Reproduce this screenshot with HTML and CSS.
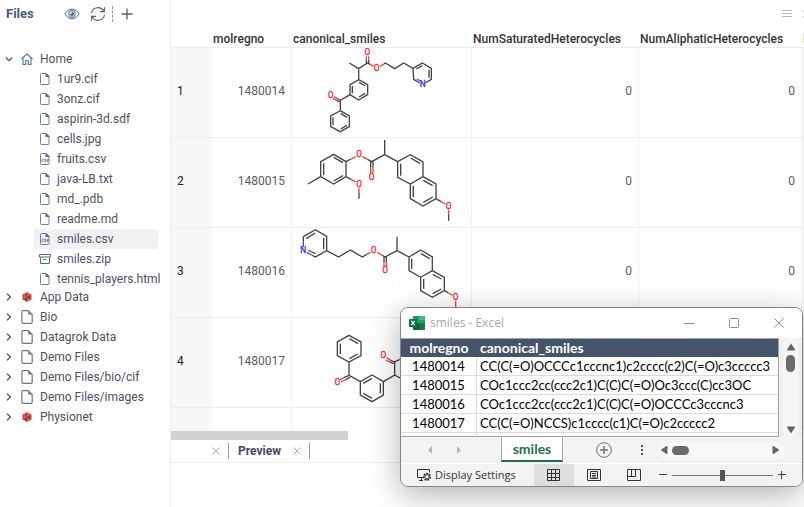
FILE: index.html
```html
<!DOCTYPE html>
<html lang="en">
<head>
<meta charset="utf-8">
<title>Files</title>
<link rel="stylesheet" href="styles.css">
</head>
<body>
<svg class="defs" aria-hidden="true">
  <symbol id="i-file" viewBox="0 0 12 14"><path d="M2.5 1.5h4.5l3 3v7q0 1-1 1h-6.500q-1 0-1-1v-9q0-1 1-1z" fill="none" stroke="#6d809f"/><path d="M7 1.500v3h3z" fill="#6d809f" stroke="#4b658f"/></symbol>
  <symbol id="i-csv" viewBox="0 0 12 14"><path d="M2.500 1.500h4.500l3 3v7q0 1-1 1h-6.500q-1 0-1-1v-9q0-1 1-1z" fill="none" stroke="#6d809f"/><path d="M7 1.500v3h3z" fill="#6d809f" stroke="#4b658f"/><path d="M4.600 7.300h-1q-.6 0-.6.600v1.200q0 .6.600.6h1M7 7.300h-.8q-.7 0-.7.600t.7.600.7.600-.7.600h-.8M7.900 7.100l.7 2.600.7-2.600" fill="none" stroke="#5a6d96" stroke-width=".9"/></symbol>
  <symbol id="i-zip" viewBox="0 0 12 14"><path d="M.5 2.500h11v2.500h-11zM1.500 5.500v6h9v-6M4.500 7.500h3" fill="none" stroke="#466c9b"/></symbol>
  <symbol id="i-page" viewBox="0 0 12 14"><path d="M2 .7h5.300l3.900 3.900v7.600q0 1.100-1.100 1.100h-8.100q-1.100 0-1.100-1.100v-10.400q0-1.100 1.100-1.100z" fill="none" stroke="#757575" stroke-width="1.200"/><path d="M7.200.7v3.900h4z" fill="#757575"/></symbol>
  <symbol id="i-home" viewBox="0 0 12 14"><path d="M.5 7L6 2l5.500 5M2 6v6.500h2.700v-4h2.600v4h2.700v-6.500" fill="none" stroke="#5b7396" stroke-width="1.100" stroke-linejoin="round"/></symbol>
  <symbol id="i-s3" viewBox="0 0 12 14"><path d="M1.500 4.500l2-1v7l-2-1zM10.500 4.500l-2-1v7l2-1z" fill="#c9473a"/><path d="M3 3.800l3-1.800 3 1.800v6.400l-3 1.800-3-1.800z" fill="#d65c4b"/><path d="M4.500 4l1.500-.8v3l-1.500.3zM6 6.500l3-.5v2.500l-3-.5zM3 8h3v3.800l-1.500-1z" fill="#a92f27"/></symbol>
  <symbol id="i-right" viewBox="0 0 8 8"><path d="M2 .8l3.500 3.200-3.500 3.200" fill="none" stroke="#4d5566" stroke-width="1.300"/></symbol>
  <symbol id="i-down" viewBox="0 0 8 8"><path d="M.8 2.500l3.200 3.200 3.200-3.200" fill="none" stroke="#4d5566" stroke-width="1.300"/></symbol>
</svg>

<aside class="sidebar">
  <header class="side-head">
    <h1>Files</h1>
    <button class="tool" aria-label="Preview files"><svg width="16" height="16" viewBox="0 0 16 16"><g fill="none" stroke="#43628e"><path d="M.8 8Q3.500 3.200 8 3.200T15.200 8Q12.500 12.800 8 12.800T.8 8z"/><circle cx="8" cy="8" r="3.300"/></g><path d="M8 6a2 2 0 1 1-2 2q1.800 0 2-2z" fill="#43628e"/></svg></button>
    <button class="tool" aria-label="Refresh"><svg width="16" height="16" viewBox="0 0 16 16" fill="none" stroke="#43628e" stroke-width="1.100"><path d="M1.500 7A6.600 6.600 0 0 1 13.700 5M14.500 9A6.600 6.600 0 0 1 2.300 11M14.400 1.300v4.300h-4.300M1.600 14.700v-4.300h4.300"/></svg></button>
    <span class="dash"></span>
    <button class="tool" aria-label="Add"><svg width="12" height="12" viewBox="0 0 12 12"><path d="M6 .5v11M.5 6h11" stroke="#43628e" stroke-width="1.300"/></svg></button>
  </header>
  <ul class="tree">
    <li><div class="node"><svg class="arrow"><use href="#i-down"/></svg><svg class="icon"><use href="#i-home"/></svg>Home</div>
      <ul class="files">
        <li><svg class="icon"><use href="#i-file"/></svg>1ur9.cif</li>
        <li><svg class="icon"><use href="#i-file"/></svg>3onz.cif</li>
        <li><svg class="icon"><use href="#i-file"/></svg>aspirin-3d.sdf</li>
        <li><svg class="icon"><use href="#i-file"/></svg>cells.jpg</li>
        <li><svg class="icon"><use href="#i-csv"/></svg>fruits.csv</li>
        <li><svg class="icon"><use href="#i-file"/></svg>java-LB.txt</li>
        <li><svg class="icon"><use href="#i-file"/></svg>md_.pdb</li>
        <li><svg class="icon"><use href="#i-file"/></svg>readme.md</li>
        <li class="selected"><svg class="icon"><use href="#i-csv"/></svg>smiles.csv</li>
        <li><svg class="icon"><use href="#i-zip"/></svg>smiles.zip</li>
        <li><svg class="icon"><use href="#i-file"/></svg>tennis_players.html</li>
      </ul>
    </li>
    <li><div class="node"><svg class="arrow"><use href="#i-right"/></svg><svg class="icon"><use href="#i-s3"/></svg>App Data</div></li>
    <li><div class="node"><svg class="arrow"><use href="#i-right"/></svg><svg class="icon"><use href="#i-page"/></svg>Bio</div></li>
    <li><div class="node"><svg class="arrow"><use href="#i-right"/></svg><svg class="icon"><use href="#i-page"/></svg>Datagrok Data</div></li>
    <li><div class="node"><svg class="arrow"><use href="#i-right"/></svg><svg class="icon"><use href="#i-page"/></svg>Demo Files</div></li>
    <li><div class="node"><svg class="arrow"><use href="#i-right"/></svg><svg class="icon"><use href="#i-page"/></svg>Demo Files/bio/cif</div></li>
    <li><div class="node"><svg class="arrow"><use href="#i-right"/></svg><svg class="icon"><use href="#i-page"/></svg>Demo Files/images</div></li>
    <li><div class="node"><svg class="arrow"><use href="#i-right"/></svg><svg class="icon"><use href="#i-s3"/></svg>Physionet</div></li>
  </ul>
</aside>

<main class="main">
  <div class="view-bar">
    <button aria-label="Menu"><svg width="10" height="8" viewBox="0 0 10 8"><path d="M0 .5h10M0 3.500h10M0 6.500h10" stroke="#b5b5b5"/></svg></button>
    <button aria-label="Close view"><svg width="8" height="8" viewBox="0 0 8 8"><path d="M.5.5l7 7M7.500.5l-7 7" stroke="#b5b5b5"/></svg></button>
  </div>
  <div class="grid-wrap">
    <table class="grid">
      <colgroup><col class="c-num"><col class="c-reg"><col class="c-mol"><col class="c-sat"><col class="c-ali"><col class="c-rest"></colgroup>
      <thead><tr><th></th><th>molregno</th><th>canonical_smiles</th><th>NumSaturatedHeterocycles</th><th>NumAliphaticHeterocycles</th><th>N</th></tr></thead>
      <tbody>
        <tr><th>1</th><td>1480014</td><td class="mol">
          <svg viewBox="366 69 537 267">
            <g class="bond"><path d="M538 114L566 131L592 114L602 119M566 131V164M642 117L646 114L674 131L701 114L729 130M774 169L784 163V130L757 114L729 130L731 163L741 169M739 132L757 122M777 134V158M566 164L593 179V209L566 225L540 209V179ZM567 172L586 183M586 205L567 216M547 205V183M540 209L511 226L502 221M508 231L501 227M511 226V257M511 257L538 273V305L511 320L482 305V273ZM512 265L531 277M531 301L512 312M489 301V277M589 114V104M596 114V104"/></g>
            <g class="bond o"><path d="M589 104V94M596 104V94M602 119L611 124M630 124L642 117M502 221L492 215M501 227L489 220"/></g>
            <g class="bond n"><path d="M774 169L766 174M741 169L749 174M740 162L751 168"/></g>
            <text class="o" x="592" y="91">O</text><text class="o" x="620" y="138">O</text><text class="o" x="482" y="218">O</text><text class="n" x="758" y="187">N</text>
          </svg></td><td>0</td><td>0</td><td></td></tr>
        <tr><th>2</th><td>1480015</td><td class="mol">
          <svg viewBox="6 9 537 267">
            <g class="bond"><path d="M54 147L92 125M168 80L131 58L92 80V125L131 147L168 125ZM159 83L131 67M101 85V120M131 138L159 122M168 80L183 72M234 74L245 80L284 59V15M284 59L323 80M323 80L361 59L399 81V125L361 147L323 127ZM332 86V122M362 69L390 85M399 125L438 147V191L399 213L361 191V147M400 136L428 152M428 186L400 202M370 186V153M438 191L453 200M168 125L183 133M207 191V174M476 257V240M242 80V98M249 80V98"/></g>
            <g class="bond o"><path d="M183 72L197 65M217 65L234 74M242 98V115M249 98V115M183 133L197 141M207 158V174M453 200L466 207M476 224V240"/></g>
            <text class="o" x="207" y="67">O</text><text class="o" x="245" y="134">O</text><text class="o" x="207" y="156">O</text><text class="o" x="476" y="221">O</text>
          </svg></td><td>0</td><td>0</td><td></td></tr>
        <tr><th>3</th><td>1480016</td><td class="mol">
          <svg viewBox="6 9 537 267">
            <g class="bond"><path d="M40 50V35L76 14L110 34V77L76 96L65 90M101 39V72M49 41L75 24M76 86L66 81M110 77L146 96L181 75L217 96L230 88M275 90L285 96L321 77V35M321 77L357 96M357 96L392 75L427 96V137L392 157L357 137ZM365 101V132M393 86L419 101M427 137L463 157V197L427 217L392 197V157M428 148L454 162M454 192L428 206M401 191V162M463 197L475 204M282 96V112M289 96V112"/></g>
            <g class="bond o"><path d="M230 88L241 82M262 82L275 90M282 112V126M289 112V126M475 204L487 211M497 228V262"/></g>
            <g class="bond n"><path d="M40 50V66M50 82L65 90M55 76L66 81"/></g>
            <text class="n" x="40" y="85">N</text><text class="o" x="251" y="84">O</text><text class="o" x="285" y="145">O</text><text class="o" x="497" y="225">O</text>
          </svg></td><td>0</td><td>0</td><td></td></tr>
        <tr><th>4</th><td>1480017</td><td class="mol">
          <svg viewBox="366 24 537 267">
            <g class="bond"><path d="M537 76L573 96V137L537 156L502 137V96ZM538 86L564 101M564 132L538 146M511 132V101M537 156V196L571 215M571 215L606 195L640 215V255L606 275L571 255ZM580 220L606 205M631 220V250M606 265L580 250M640 215L674 195V156L688 149M674 195L710 215M674 156L661 150M671 161L658 155M537 196L522 203M540 202L525 210"/></g>
            <g class="bond o"><path d="M661 150L650 143M658 155L647 150M522 203L510 209M525 210L513 216"/></g>
            <g class="bond n"><path d="M688 149L700 142"/></g>
            <text class="o" x="640" y="145">O</text><text class="o" x="502" y="224">O</text>
          </svg></td><td>0</td><td>0</td><td></td></tr>
        <tr><th></th><td></td><td class="mol"><svg viewBox="366 294 537 267"><path class="bond" d="M684 388H700"/></svg></td><td></td><td></td><td></td></tr>
      </tbody>
    </table>
  </div>
  <div class="hscroll"><div class="hthumb"></div></div>
  <div class="tabs">
    <button aria-label="Close tab"><svg width="8" height="8" viewBox="0 0 8 8"><path d="M.5.5l7 7M7.500.5l-7 7" stroke="#adadad"/></svg></button>
    <span class="sep"></span>
    <b>Preview</b>
    <button aria-label="Close Preview"><svg width="8" height="8" viewBox="0 0 8 8"><path d="M.5.5l7 7M7.500.5l-7 7" stroke="#adadad"/></svg></button>
    <span class="sep"></span>
  </div>
</main>

<section class="excel" aria-label="smiles - Excel">
  <header class="title">
    <svg class="logo" width="16" height="14" viewBox="0 0 16 14"><path d="M4 1q0-1 1-1h10q1 0 1 1v12q0 1-1 1h-10q-1 0-1-1z" fill="#21a366"/><path d="M4 0h6v4h-6z" fill="#219b5f"/><path d="M10 0h5q1 0 1 1v3h-6z" fill="#33c481"/><path d="M4 7h6v7h-5q-1 0-1-1z" fill="#185c37"/><path d="M10 7h6v6q0 1-1 1h-5z" fill="#107c41"/><rect y="3" width="8" height="8" rx="1" fill="#0f7040"/><path d="M2.300 4.800l3.400 4.400M5.700 4.800l-3.400 4.400" stroke="#fff" stroke-width="1.200"/></svg>
    <span>smiles - Excel</span>
    <button aria-label="Minimize"><svg width="12" height="12" viewBox="0 0 12 12"><path d="M1 6.500h10" stroke="#8c8c8c"/></svg></button>
    <button aria-label="Maximize"><svg width="12" height="12" viewBox="0 0 12 12"><rect x="1.500" y="1.500" width="9" height="9" rx="1" fill="none" stroke="#8c8c8c"/></svg></button>
    <button aria-label="Close"><svg width="12" height="12" viewBox="0 0 12 12"><path d="M1.500 1.500l9 9M10.500 1.500l-9 9" stroke="#8c8c8c"/></svg></button>
  </header>
  <div class="sheet-row">
    <div class="sheet-wrap">
      <table class="sheet">
        <colgroup><col class="s-reg"><col></colgroup>
        <thead><tr><th>molregno</th><th>canonical_smiles</th></tr></thead>
        <tbody>
          <tr><td>1480014</td><td>CC(C(=O)OCCCc1cccnc1)c2cccc(c2)C(=O)c3ccccc3</td></tr>
          <tr><td>1480015</td><td>COc1ccc2cc(ccc2c1)C(C)C(=O)Oc3ccc(C)cc3OC</td></tr>
          <tr><td>1480016</td><td>COc1ccc2cc(ccc2c1)C(C)C(=O)OCCCc3cccnc3</td></tr>
          <tr><td>1480017</td><td>CC(C(=O)NCCS)c1cccc(c1)C(=O)c2ccccc2</td></tr>
          <tr><td></td><td></td></tr>
        </tbody>
      </table>
    </div>
    <div class="vbar">
      <button aria-label="Scroll up"><svg width="10" height="8" viewBox="0 0 10 8"><path d="M5 .5l4 6q.3 1-.6 1h-6.800q-.9 0-.6-1z" fill="#666"/></svg></button>
      <div class="vthumb"></div>
      <button aria-label="Scroll down"><svg width="10" height="8" viewBox="0 0 10 8"><path d="M5 7.500l4-6q.3-1-.6-1h-6.800q-.9 0-.6 1z" fill="#666"/></svg></button>
    </div>
  </div>
  <nav class="sheet-tabs">
    <button class="nav first" aria-label="Previous sheet"><svg width="4" height="8" viewBox="0 0 4 8"><path d="M4 0v8l-4-4z" fill="#b8b8b8"/></svg></button>
    <button class="nav" aria-label="Next sheet"><svg width="4" height="8" viewBox="0 0 4 8"><path d="M0 0v8l4-4z" fill="#b8b8b8"/></svg></button>
    <button class="tab">smiles</button>
    <button class="add" aria-label="New sheet"><svg width="16" height="16" viewBox="0 0 16 16" fill="none" stroke="#6f6f6f"><circle cx="8" cy="8" r="7.300"/><path d="M8 4v8M4 8h8" stroke-width="1.500"/></svg></button>
    <svg class="dots" width="2" height="12" viewBox="0 0 2 12"><path d="M0 1h2v2h-2zM0 5h2v2h-2zM0 9h2v2h-2z" fill="#555"/></svg>
    <div class="hbar">
      <button aria-label="Scroll left"><svg width="8" height="10" viewBox="0 0 8 10"><path d="M.5 5l6-4q1-.3 1 .6v6.800q0 .9-1 .6z" fill="#666"/></svg></button>
      <div class="pill"></div>
      <button aria-label="Scroll right"><svg width="8" height="10" viewBox="0 0 8 10"><path d="M7.500 5l-6-4q-1-.3-1 .6v6.800q0 .9 1 .6z" fill="#666"/></svg></button>
    </div>
  </nav>
  <footer class="status">
    <button class="display"><svg width="15" height="14" viewBox="0 0 15 14" fill="none" stroke="#333"><path d="M6 9.500H.5v-8h12v3M2 12.500h4M4.500 9.500v3"/><circle cx="10" cy="8.800" r="3.200" stroke-width="1.800" stroke-dasharray="1.800 1"/><circle cx="10" cy="8.800" r="2.300"/></svg>Display Settings</button>
    <button class="view on" aria-label="Normal view"><svg width="14" height="14" viewBox="0 0 14 14"><path d="M.5 1.500h12v11h-12zM4.500 1.500v11M8.500 1.500v11M.5 5.500h12M.5 9.500h12" fill="none" stroke="#333"/></svg></button>
    <button class="view" aria-label="Page layout"><svg width="14" height="14" viewBox="0 0 14 14"><path d="M.5 1.500h13v11h-13zM3.500 3.500h7v7h-7zM5 5.500h4M5 7.500h4M5 9h4" fill="none" stroke="#333"/></svg></button>
    <button class="view" aria-label="Page break preview"><svg width="14" height="14" viewBox="0 0 14 14"><path d="M.5 1.500h13v11h-13zM4.500 1.500v7M8.500 1.500v7M.5 8.500h8" fill="none" stroke="#333"/></svg></button>
    <button class="zoom" aria-label="Zoom out"><svg width="8" height="8" viewBox="0 0 8 8"><path d="M0 3.500h8" stroke="#444"/></svg></button>
    <input type="range" min="0" max="100" value="50" aria-label="Zoom">
    <button class="zoom" aria-label="Zoom in"><svg width="8" height="8" viewBox="0 0 8 8"><path d="M0 3.500h8M3.500 0v8" stroke="#444"/></svg></button>
  </footer>
</section>
</body>
</html>
```
FILE: styles.css
```css
* { box-sizing: border-box; }
html, body { height: 100%; }
body {
  margin: 0;
  display: flex;
  position: relative;
  overflow: hidden;
  background: #fff;
  color: #4d5261;
  font: 12px/20px Roboto, sans-serif;
}
button {
  display: flex;
  flex: none;
  align-items: center;
  justify-content: center;
  padding: 0;
  border: 0;
  background: none;
  color: inherit;
  font: inherit;
}
svg { display: block; flex: none; }
.defs { position: absolute; width: 0; height: 0; }
ul { margin: 0; padding: 0; list-style: none; }

/* Sidebar */
.sidebar { flex: none; width: 170px; }
.side-head { display: flex; align-items: center; height: 28px; padding-left: 6px; }
.side-head h1 { margin: 0; width: 58px; font-size: 13px; font-weight: 700; color: #455b80; }
.tool { margin-right: 10px; }
.dash { height: 16px; margin-left: -4px; margin-right: 8px; border-left: 1px dashed #8d99ad; }
.tree { padding: 21px 12px 0 5px; }
.node { display: flex; align-items: center; height: 20px; }
.arrow { width: 8px; height: 8px; margin-right: 8px; }
.icon { width: 12px; height: 14px; }
.node .icon { margin-right: 7px; }
.files { margin: 0 0 -2px 29px; }
.files li { display: flex; align-items: center; gap: 6px; height: 20px; padding-left: 5px; white-space: nowrap; }
.files .selected { background: #f1f1f4; }

/* Data grid */
.main { flex: 1; min-width: 0; display: flex; flex-direction: column; border-left: 1px solid #ececee; }
.view-bar { display: flex; justify-content: flex-end; align-items: center; gap: 10px; height: 28px; margin-right: -6px; }
.grid-wrap { height: 403px; overflow: hidden; }
.grid { width: 100%; table-layout: fixed; border-collapse: separate; border-spacing: 0; }
.c-num { width: 41px; }
.c-reg { width: 80px; }
.c-mol { width: 180px; }
.c-sat { width: 167px; }
.c-ali { width: 163px; }
.grid th, .grid td { padding: 0; border-bottom: 1px solid #ededed; }
.grid thead th { height: 20px; padding: 4px 0 0 1px; text-align: left; font-weight: 500; line-height: 15px; color: #333; overflow: hidden; white-space: nowrap; }
.grid tbody tr { height: 90px; }
.grid tbody th { background: #f7f7f7; padding: 0 0 4px 6px; text-align: left; font-weight: 400; color: #222; }
.grid td { border-right: 1px solid #f1f1f1; padding: 0 6px 4px 0; text-align: right; color: #5c5c5c; }
.grid .mol { padding: 0; }
.mol svg { width: 100%; height: 89px; }
.bond { fill: none; stroke: #444; stroke-width: 4; }
.bond.o { stroke: #ff3b3b; }
.bond.n { stroke: #4545ee; }
.mol text { font: 25px Roboto, sans-serif; text-anchor: middle; stroke-width: 1; }
text.o { fill: #ff2b2b; stroke: #ff2b2b; }
text.n { fill: #3535ee; stroke: #3535ee; }
.hscroll { height: 9px; }
.hthumb { width: 28%; height: 9px; background: #d1d1d1; }
.tabs { display: flex; align-items: center; height: 23px; padding-left: 41px; border-bottom: 1px solid #ededed; }
.tabs b { margin: 0 12px 0 9px; font-weight: 700; color: #454c5d; }
.sep { width: 1px; height: 16px; margin-left: 8px; background: #999; }

/* Spreadsheet window */
.excel {
  position: absolute;
  right: 1px;
  bottom: 20px;
  width: 403px;
  border: 1px solid #858585;
  border-radius: 8px;
  overflow: hidden;
  background: #f0f0f0;
  box-shadow: 0 8px 32px rgba(0, 0, 0, .3);
  color: #000;
}
.title { display: flex; align-items: center; height: 30px; padding: 0 17px 0 8px; background: #fff; color: #a8a8a8; font: 12px/16px "Open Sans", sans-serif; }
.title span { flex: 1; margin-left: 5px; }
.title button { margin-left: 33px; }
.sheet-row { display: flex; height: 99px; }
.sheet-wrap { flex: 1; overflow: hidden; border: 1px solid #a3a3a3; border-left: 0; background: #fff; }
.sheet { width: 100%; table-layout: fixed; border-collapse: separate; border-spacing: 0; font: 13px/18px Lato, sans-serif; white-space: nowrap; }
.s-reg { width: 76px; }
.sheet th { height: 18px; padding: 0 0 0 3px; background: #44546a; color: #fff; font-size: 14px; font-weight: 700; text-align: left; }
.sheet th:first-child { padding: 0; text-align: center; }
.sheet td { height: 19px; padding: 0 0 0 3px; border-bottom: 1px solid #dadada; }
.sheet td:first-child { padding: 0; border-right: 1px solid #dadada; text-align: center; }
.vbar { display: flex; flex-direction: column; align-items: center; width: 15px; margin: 0 4px; padding: 5px 0 3px; border-radius: 8px; background: #f6f6f6; }
.vthumb { width: 9px; height: 17px; margin: 4px 0 auto; border-radius: 5px; background: #6b6b6b; }
.sheet-tabs { display: flex; align-items: center; height: 27px; border-bottom: 1px solid #fff; background: #f3f3f3; }
.nav { width: 4px; margin-right: 25px; }
.nav.first { margin-left: 27px; }
.nav + .tab { margin-left: 15px; }
.tab { align-self: flex-start; width: 62px; height: 25px; border: 1px solid #ababab; border-top: 0; border-bottom: 2px solid #1f7346; background: #fff; color: #1f7346; font: 700 14px/20px Lato, sans-serif; }
.add { margin-left: 33px; }
.dots { margin-left: 29px; }
.hbar { display: flex; align-items: center; flex: 1; height: 17px; margin: 0 18px 0 16px; padding: 0 4px 0 1px; border-radius: 8px; background: #f8f8f8; }
.pill { flex: none; width: 17px; height: 9px; margin: 0 auto 0 4px; border-radius: 5px; background: #6b6b6b; }
.status { display: flex; align-items: center; height: 22px; padding: 0 16px 0 16px; background: #f3f3f3; }
.display { gap: 3px; width: 99px; margin-right: 18px; justify-content: flex-start; color: #333; white-space: nowrap; font: 11px/16px "Open Sans", sans-serif; }
.view { width: 40px; height: 22px; }
.view.on { background: #dedede; }
.zoom { width: 8px; }
.view + .zoom { margin-left: 5px; }
.status input { flex: 1; min-width: 0; height: 12px; margin: 0 5px; appearance: none; background: linear-gradient(#777, #777) center / 100% 1px no-repeat; }
.status input::-webkit-slider-thumb { appearance: none; width: 5px; height: 11px; background: #555; }
```
